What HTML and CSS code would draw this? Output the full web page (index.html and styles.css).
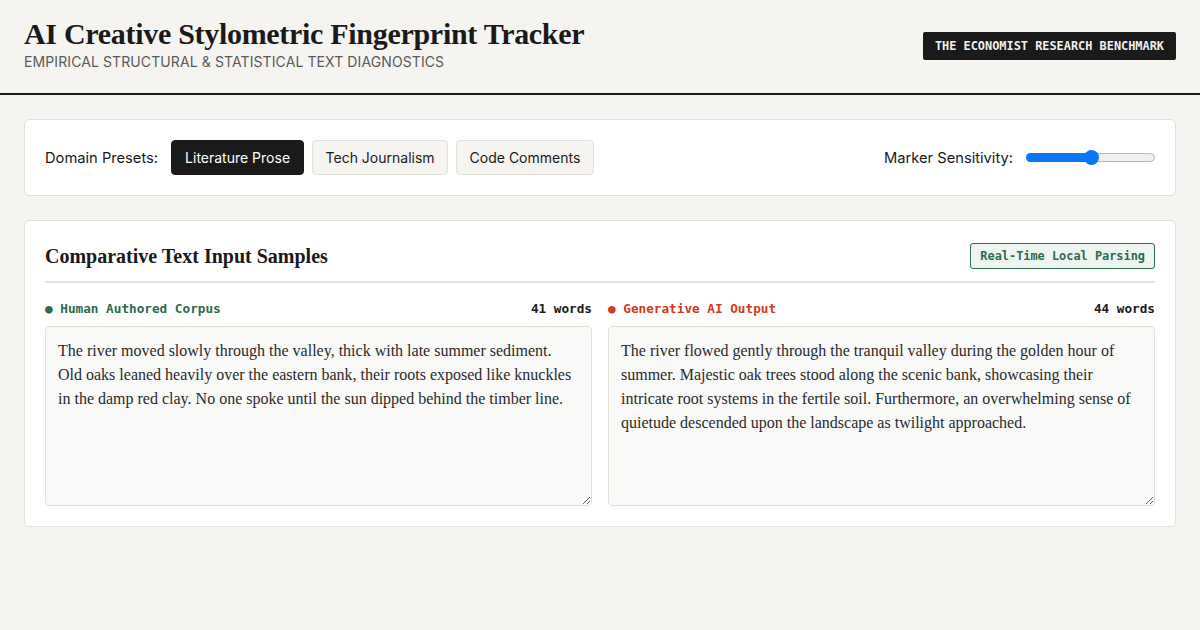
FILE: index.html
```html
<!DOCTYPE html>
<html>
<head>
<meta charset="utf-8">
<link rel="stylesheet" href="styles.css">
</head>
<body>
<header class="top">
  <div class="brand">
    <h1 class="title">AI Creative Stylometric Fingerprint Tracker</h1>
    <div class="subtitle">Empirical Structural &amp; Statistical Text Diagnostics</div>
  </div>
  <div class="bench">THE ECONOMIST RESEARCH BENCHMARK</div>
</header>
<main class="main">
  <section class="panel controls">
    <div class="presets">
      <span class="label">Domain Presets:</span>
      <button class="btn active">Literature Prose</button>
      <button class="btn">Tech Journalism</button>
      <button class="btn">Code Comments</button>
    </div>
    <div class="sens">
      <span class="label">Marker Sensitivity:</span>
      <div class="slider"><div class="fill"></div><div class="knob"></div></div>
    </div>
  </section>
  <section class="panel inputs">
    <div class="inputs-head">
      <h2 class="heading">Comparative Text Input Samples</h2>
      <span class="tag">Real-Time Local Parsing</span>
    </div>
    <div class="cols">
      <div class="col">
        <div class="col-head"><span class="src human">● Human Authored Corpus</span><span class="count">41 words</span></div>
        <textarea class="ta">The river moved slowly through the valley, thick with late summer sediment. Old oaks leaned heavily over the eastern bank, their roots exposed like knuckles in the damp red clay. No one spoke until the sun dipped behind the timber line.</textarea>
      </div>
      <div class="col">
        <div class="col-head"><span class="src ai">● Generative AI Output</span><span class="count">44 words</span></div>
        <textarea class="ta">The river flowed gently through the tranquil valley during the golden hour of summer. Majestic oak trees stood along the scenic bank, showcasing their intricate root systems in the fertile soil. Furthermore, an overwhelming sense of quietude descended upon the landscape as twilight approached.</textarea>
      </div>
    </div>
  </section>
</main>
</body>
</html>
```
FILE: styles.css
```css
* { box-sizing: border-box; }
html, body { margin: 0; padding: 0; }
body {
  background: #f5f4f0;
  color: #1a1a1a;
  font-family: Inter, "Liberation Sans", sans-serif;
  width: 1200px;
  height: 630px;
  overflow: hidden;
}
.top {
  display: flex;
  justify-content: space-between;
  align-items: center;
  padding: 16px 24px 21px;
  border-bottom: 2px solid #1a1a1a;
}
.title {
  margin: 0;
  font-family: "Liberation Serif", serif;
  font-weight: 700;
  font-size: 30px;
  line-height: 36px;
  letter-spacing: -0.3px;
  color: #1a1a1a;
}
.subtitle {
  margin: 0;
  font-size: 14px;
  line-height: 20px;
  text-transform: uppercase;
  letter-spacing: 0.1px;
  color: #5a5a5a;
}
.bench {
  background: #1a1a1a;
  color: #f0f0ec;
  font-family: "DejaVu Sans Mono", monospace;
  font-weight: 700;
  font-size: 11.9px;
  padding: 7px 12px;
  line-height: 14px;
  border-radius: 2px;
  margin-top: 4px;
}
.main {
  padding: 24px;
  display: flex;
  flex-direction: column;
  gap: 24px;
}
.panel {
  background: #fff;
  border: 1px solid #e3e0d8;
  border-radius: 6px;
}
.controls {
  display: flex;
  justify-content: space-between;
  align-items: center;
  padding: 20px 20px;
}
.presets { display: flex; align-items: center; gap: 8px; }
.label { font-size: 14.7px; color: #1a1a1a; }
.presets .label { margin-right: 5px; }
.btn {
  font-family: Inter, "Liberation Sans", sans-serif;
  font-size: 14px;
  height: 35px;
  padding: 0 12.5px;
  border: 1px solid #e3e0d8;
  background: #f5f4f0;
  color: #1a1a1a;
  border-radius: 4px;
}
.btn.active { background: #1a1a1a; color: #fff; border-color: #1a1a1a; padding: 0 13px; }
.sens { display: flex; align-items: center; gap: 13px; }
.slider {
  position: relative;
  width: 129px;
  height: 9px;
  border-radius: 5px;
  background: #efefef;
  border: 1px solid #b8b8b8;
}
.fill {
  position: absolute;
  left: -1px; top: -1px; bottom: -1px;
  width: 66px;
  background: #0a75f5;
  border-radius: 5px;
}
.knob {
  position: absolute;
  left: 57px; top: -4px;
  width: 15px; height: 15px;
  border-radius: 50%;
  background: #0a75f5;
}
.inputs { padding: 22px 20px 20px; }
.inputs-head {
  display: flex;
  justify-content: space-between;
  align-items: center;
  padding-bottom: 12px;
  border-bottom: 2px solid #e3e0d8;
}
.heading {
  margin: 0;
  font-family: "Liberation Serif", serif;
  font-weight: 700;
  font-size: 20px;
  line-height: 26px;
}
.tag {
  font-family: "DejaVu Sans Mono", monospace;
  font-weight: 700;
  font-size: 11.9px;
  color: #2d6a4f;
  background: #eef4f0;
  border: 1px solid #2d6a4f;
  border-radius: 3px;
  padding: 5px 9px;
  line-height: 14px;
}
.cols {
  display: grid;
  grid-template-columns: 1fr 1fr;
  gap: 16px;
  margin-top: 17px;
}
.col-head {
  display: flex;
  justify-content: space-between;
  font-family: "DejaVu Sans Mono", monospace;
  font-weight: 700;
  font-size: 12.7px;
  line-height: 18px;
  margin-bottom: 8px;
}
.src.human { color: #2d6a4f; }
.src.ai { color: #d03a22; }
.count { color: #1a1a1a; }
.ta {
  display: block;
  width: 100%;
  height: 180px;
  margin: 0;
  background: #f9f9f7;
  border: 1px solid #e3e0d8;
  border-radius: 4px;
  padding: 12px;
  font-family: "Liberation Serif", serif;
  font-size: 16px;
  line-height: 24px;
  color: #2a2a2a;
  resize: vertical;
}
```
